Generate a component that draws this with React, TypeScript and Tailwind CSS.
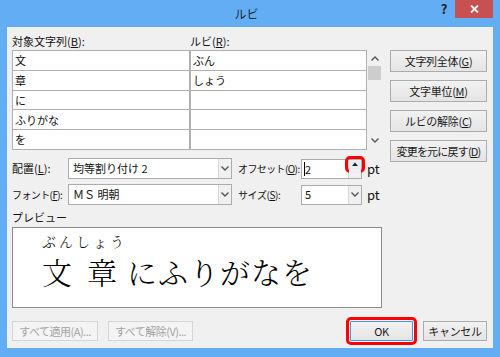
import { ReactNode } from 'react';

const jp = "font-['Meiryo_UI','Noto_Sans_CJK_JP','Noto_Sans',sans-serif]";

function Mn({ label, k, tail = '' }: { label: string; k: string; tail?: string }) {
  return (
    <span className="whitespace-nowrap">
      {label}(<u>{k}</u>){tail}
    </span>
  );
}

function Btn({ children, w = 'w-[97px]', h = 'h-[22px]', extra = '' }: { children: ReactNode; w?: string; h?: string; extra?: string }) {
  return (
    <div
      className={`${w} ${h} shrink-0 flex items-center justify-center whitespace-nowrap border border-[#acacac] bg-gradient-to-b from-[#f2f2f2] to-[#e4e4e4] text-[11px] tracking-[-0.3px] text-[#1a1a1a] ${extra}`}
    >
      {children}
    </div>
  );
}

function Chevron({ up = false }: { up?: boolean }) {
  return (
    <svg width="8" height="5" viewBox="0 0 8 5" className="block">
      <path d={up ? 'M0.5 4.5 L4 1 L7.5 4.5' : 'M0.5 0.5 L4 4 L7.5 0.5'} fill="none" stroke="#555" strokeWidth="1.4" />
    </svg>
  );
}

function Select({ value }: { value: string }) {
  return (
    <div className="w-[164px] h-[21px] shrink-0 flex border border-[#acacac] bg-white">
      <div className="flex-1 flex items-center pl-[4px] text-[11px] text-[#111]">{value}</div>
      <div className="w-[13px] flex items-center justify-center border-l border-[#d6d6d6] bg-[#f0f0f0]">
        <Chevron />
      </div>
    </div>
  );
}

export default function App() {
  const rows = [
    ['文', 'ぶん'],
    ['章', 'しょう'],
    ['に', ''],
    ['ふりがな', ''],
    ['を', ''],
  ];

  return (
    <div className={`w-[500px] h-[357px] overflow-hidden bg-[#62adf4] flex flex-col ${jp}`}>
      {/* Title bar */}
      <div className="h-[27px] shrink-0 flex items-start">
        <div className="flex-1 h-[27px] flex items-center justify-center pl-[60px] text-[12px] text-[#1e2a38]">ルビ</div>
        <div className="w-[22px] h-[18px] flex items-center justify-center text-[13px] font-bold text-[#222]">?</div>
        <div className="w-[38px] h-[18px] mr-[7px] bg-[#c75050] flex items-center justify-center">
          <svg width="9" height="8" viewBox="0 0 9 8">
            <path d="M1 0.5 L8 7.5 M8 0.5 L1 7.5" stroke="#fff" strokeWidth="1.8" />
          </svg>
        </div>
      </div>

      {/* Client area */}
      <div className="mx-[7px] mb-[9px] h-[321px] bg-[#f0f0f0] pl-[5px] pt-[5px] flex flex-col">
        <div className="flex">
          {/* Left column */}
          <div className="w-[370px] flex flex-col">
            <div className="h-[18px] flex items-center text-[11px] text-[#111]">
              <div className="w-[178px]">
                <Mn label="対象文字列" k="B" tail=":" />
              </div>
              <Mn label="ルビ" k="R" tail=":" />
            </div>
            <div className="flex">
              <div className="w-[355px] h-[100px] bg-[#b0b0b0] p-[1px] grid grid-cols-[176px_1fr] grid-rows-5 gap-x-[2px] gap-y-[1px]">
                {rows.map(([a, b], i) => (
                  <div key={i} className="contents">
                    <div className="bg-white flex items-center pl-[2px] text-[11px] text-[#111]">{a}</div>
                    <div className="bg-white flex items-center pl-[2px] text-[11px] text-[#111]">{b}</div>
                  </div>
                ))}
              </div>
              <div className="w-[15px] h-[100px] flex flex-col items-center">
                <div className="h-[14px] flex items-center justify-center pt-[3px]">
                  <Chevron up />
                </div>
                <div className="mt-[2px] w-[13px] h-[14px] bg-[#cdcdcd]" />
                <div className="flex-1" />
                <div className="h-[14px] flex items-center justify-center pb-[6px]">
                  <Chevron />
                </div>
              </div>
            </div>

            {/* Selects */}
            <div className="mt-[8px] h-[21px] flex items-center text-[11px] text-[#111]">
              <div className="w-[56px] shrink-0">
                <Mn label="配置" k="L" tail=":" />
              </div>
              <Select value="均等割り付け 2" />
              <div className="w-[69px] shrink-0 pl-[6px] text-[10px] tracking-[-0.6px]">
                <Mn label="オフセット" k="O" tail=":" />
              </div>
              <div className="w-[61px] h-[20px] shrink-0 flex border border-[#acacac] bg-white">
                <div className="flex-1 flex items-center pl-[2px]">
                  <span className="border-l border-black leading-[14px]">2</span>
                </div>
                <div className="w-[13px] flex flex-col border-l border-[#d6d6d6]">
                  <div className="flex-1 bg-[#e8eef6] flex items-center justify-center outline-[3px] outline-[#ff0000] outline-offset-[1px] rounded-[1px]">
                    <svg width="6" height="4" viewBox="0 0 6 4">
                      <path d="M0 4 L3 0.5 L6 4 Z" fill="#222" />
                    </svg>
                  </div>
                  <div className="flex-1 bg-[#f0f0f0]" />
                </div>
              </div>
              <span className="ml-[5px] text-[13px]">pt</span>
            </div>
            <div className="mt-[5px] h-[21px] flex items-center text-[11px] text-[#111]">
              <div className="w-[56px] shrink-0 text-[10px] tracking-[-0.6px]">
                <Mn label="フォント" k="F" tail=":" />
              </div>
              <Select value="ＭＳ 明朝" />
              <div className="w-[69px] shrink-0 pl-[6px] text-[10px] tracking-[-0.4px]">
                <Mn label="サイズ" k="S" tail=":" />
              </div>
              <div className="w-[61px] h-[20px] shrink-0 flex border border-[#acacac] bg-white">
                <div className="flex-1 flex items-center pl-[3px]">5</div>
                <div className="w-[13px] flex items-center justify-center border-l border-[#d6d6d6] bg-[#f0f0f0]">
                  <Chevron />
                </div>
              </div>
              <span className="ml-[5px] text-[13px]">pt</span>
            </div>

            <div className="mt-[4px] h-[16px] flex items-center text-[11px] text-[#111]">プレビュー</div>

            {/* Preview */}
            <div className="mt-[2px] w-[370px] h-[81px] overflow-hidden border border-[#8c8c8c] bg-white pl-[29px] pt-[3px] font-['Noto_Serif_CJK_JP','Noto_Sans_CJK_JP',serif] text-black">
              <div className="h-[20px] text-[14px] leading-[20px] tracking-[3px] font-light whitespace-nowrap">ぶんしょう</div>
              <div className="h-[40px] flex text-[30px] leading-[40px] font-light whitespace-nowrap">
                <span className="mr-[15px]">文</span>
                <span className="mr-[10px]">章</span>
                <span className="tracking-[1px]">にふりがなを</span>
              </div>
            </div>
          </div>

          {/* Right column buttons */}
          <div className="ml-[8px] pt-[18px] flex flex-col gap-[8px]">
            <Btn>
              <Mn label="文字列全体" k="G" />
            </Btn>
            <Btn>
              <Mn label="文字単位" k="M" />
            </Btn>
            <Btn>
              <Mn label="ルビの解除" k="C" />
            </Btn>
            <Btn extra="!tracking-[-0.8px]">
              <Mn label="変更を元に戻す" k="D" />
            </Btn>
          </div>
        </div>

        {/* Bottom buttons */}
        <div className="mt-[13px] h-[20px] flex items-center">
          <div className="w-[86px] h-[20px] flex items-center justify-center whitespace-nowrap border border-[#d5d5d5] bg-[#f4f4f4] text-[11px] tracking-[-0.5px] text-[#a3a3a3]">
            すべて適用(A)...
          </div>
          <div className="ml-[10px] w-[85px] h-[20px] flex items-center justify-center whitespace-nowrap border border-[#d5d5d5] bg-[#f4f4f4] text-[11px] tracking-[-0.5px] text-[#a3a3a3]">
            すべて解除(V)...
          </div>
          <div className="flex-1" />
          <Btn w="w-[63px]" h="h-[20px]" extra="!border-[#3c9be8] outline-[3px] outline-[#ff0000] outline-offset-[1px] rounded-[1px]">
            OK
          </Btn>
          <div className="w-[10px]" />
          <Btn w="w-[64px]" h="h-[20px]" extra="mr-[6px]">
            キャンセル
          </Btn>
        </div>
      </div>
    </div>
  );
}
